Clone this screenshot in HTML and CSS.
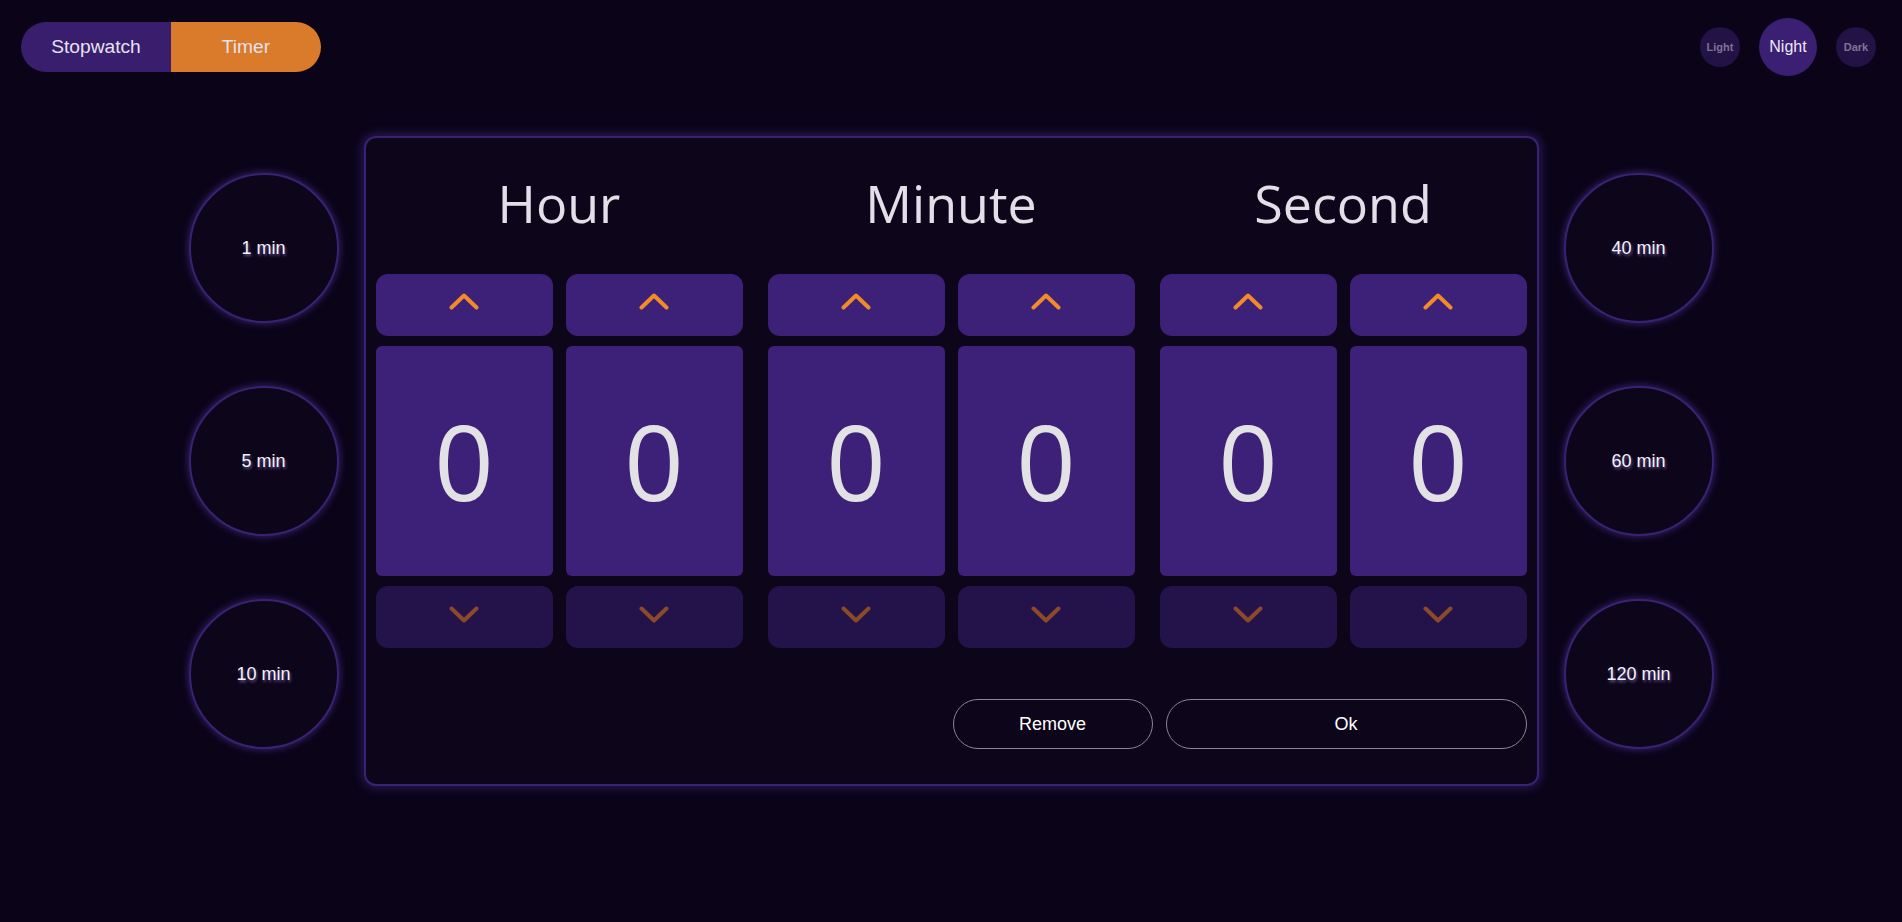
FILE: index.html
```html
<!DOCTYPE html>
<html lang="en">
<head>
<meta charset="utf-8">
<title>Timer</title>
<link rel="stylesheet" href="styles.css">
</head>
<body>
<header class="topbar">
  <div class="mode-toggle">
    <button class="mode mode-stopwatch">Stopwatch</button>
    <button class="mode mode-timer">Timer</button>
  </div>
  <div class="themes">
    <button class="theme">Light</button>
    <button class="theme theme-active">Night</button>
    <button class="theme">Dark</button>
  </div>
</header>

<main class="stage">
  <div class="presets">
    <button class="preset">1 min</button>
    <button class="preset">5 min</button>
    <button class="preset">10 min</button>
  </div>

  <section class="card">
    <div class="groups">
      <div class="group">
        <h2 class="group-label">Hour</h2>
        <div class="digits">
          <div class="digit-col">
            <button class="step step-up"><svg viewBox="0 0 30 17" class="chev"><polyline points="2.5,14.5 15,2.5 27.5,14.5"/></svg></button>
            <div class="digit">0</div>
            <button class="step step-down"><svg viewBox="0 0 30 17" class="chev"><polyline points="2.5,2.5 15,14.5 27.5,2.5"/></svg></button>
          </div>
          <div class="digit-col">
            <button class="step step-up"><svg viewBox="0 0 30 17" class="chev"><polyline points="2.5,14.5 15,2.5 27.5,14.5"/></svg></button>
            <div class="digit">0</div>
            <button class="step step-down"><svg viewBox="0 0 30 17" class="chev"><polyline points="2.5,2.5 15,14.5 27.5,2.5"/></svg></button>
          </div>
        </div>
      </div>
      <div class="group">
        <h2 class="group-label">Minute</h2>
        <div class="digits">
          <div class="digit-col">
            <button class="step step-up"><svg viewBox="0 0 30 17" class="chev"><polyline points="2.5,14.5 15,2.5 27.5,14.5"/></svg></button>
            <div class="digit">0</div>
            <button class="step step-down"><svg viewBox="0 0 30 17" class="chev"><polyline points="2.5,2.5 15,14.5 27.5,2.5"/></svg></button>
          </div>
          <div class="digit-col">
            <button class="step step-up"><svg viewBox="0 0 30 17" class="chev"><polyline points="2.5,14.5 15,2.5 27.5,14.5"/></svg></button>
            <div class="digit">0</div>
            <button class="step step-down"><svg viewBox="0 0 30 17" class="chev"><polyline points="2.5,2.5 15,14.5 27.5,2.5"/></svg></button>
          </div>
        </div>
      </div>
      <div class="group">
        <h2 class="group-label">Second</h2>
        <div class="digits">
          <div class="digit-col">
            <button class="step step-up"><svg viewBox="0 0 30 17" class="chev"><polyline points="2.5,14.5 15,2.5 27.5,14.5"/></svg></button>
            <div class="digit">0</div>
            <button class="step step-down"><svg viewBox="0 0 30 17" class="chev"><polyline points="2.5,2.5 15,14.5 27.5,2.5"/></svg></button>
          </div>
          <div class="digit-col">
            <button class="step step-up"><svg viewBox="0 0 30 17" class="chev"><polyline points="2.5,14.5 15,2.5 27.5,14.5"/></svg></button>
            <div class="digit">0</div>
            <button class="step step-down"><svg viewBox="0 0 30 17" class="chev"><polyline points="2.5,2.5 15,14.5 27.5,2.5"/></svg></button>
          </div>
        </div>
      </div>
    </div>
    <div class="actions">
      <button class="action action-remove">Remove</button>
      <button class="action action-ok">Ok</button>
    </div>
  </section>

  <div class="presets">
    <button class="preset">40 min</button>
    <button class="preset">60 min</button>
    <button class="preset">120 min</button>
  </div>
</main>
</body>
</html>
```

FILE: styles.css
```css
* {
  box-sizing: border-box;
}

html, body {
  margin: 0;
  padding: 0;
}

body {
  background: #0b0419;
  font-family: "Liberation Sans", Arial, sans-serif;
  color: #e6e2ee;
  min-height: 922px;
}

button {
  font-family: inherit;
  border: none;
  padding: 0;
  margin: 0;
  cursor: pointer;
}

/* ---------- top bar ---------- */
.topbar {
  display: flex;
  align-items: center;
  justify-content: space-between;
  padding: 18px 26px 0 21px;
  height: 76px;
}

.mode-toggle {
  display: flex;
  height: 50px;
  border-radius: 25px;
  overflow: hidden;
}

.mode {
  width: 150px;
  height: 50px;
  font-size: 19.2px;
  color: #e6e2ee;
}

.mode-stopwatch {
  background: #3a1e6e;
}

.mode-timer {
  background: #d97b2a;
}

.themes {
  display: flex;
  align-items: center;
  gap: 19px;
}

.theme {
  width: 40px;
  height: 40px;
  border-radius: 50%;
  background: #231245;
  color: #7d7396;
  font-size: 11px;
  font-weight: bold;
}

.theme-active {
  width: 58px;
  height: 58px;
  background: #3b1f72;
  color: #ece8f4;
  font-size: 16px;
  font-weight: normal;
}

/* ---------- stage ---------- */
.stage {
  display: flex;
  justify-content: center;
  align-items: center;
  gap: 25px;
  margin-top: 60px;
}

.presets {
  display: flex;
  flex-direction: column;
  gap: 63px;
}

.preset {
  width: 150px;
  height: 150px;
  border-radius: 50%;
  background: #0d0519;
  border: 2px solid #3a2172;
  box-shadow: 0 0 7px 1px rgba(86, 52, 170, 0.55);
  color: #f4f2f8;
  font-size: 18px;
  text-shadow: 1px 2px 3px rgba(150, 125, 215, 0.7);
}

/* ---------- card ---------- */
.card {
  width: 1175px;
  height: 650px;
  background: #0d0519;
  border: 2px solid #3a2172;
  border-radius: 12px;
  box-shadow: 0 0 10px 2px rgba(70, 40, 140, 0.55);
  padding: 29px 10px 35px;
  display: flex;
  flex-direction: column;
}

.groups {
  display: flex;
  gap: 25px;
}

.group {
  width: 367px;
  display: flex;
  flex-direction: column;
}

.group-label {
  margin: 0;
  height: 71px;
  line-height: 71px;
  text-align: center;
  font-family: "Open Sans", sans-serif;
  font-weight: 400;
  font-size: 52px;
  color: #e2dfe8;
}

.digits {
  display: flex;
  gap: 13px;
  margin-top: 36px;
}

.digit-col {
  width: 177px;
  display: flex;
  flex-direction: column;
  gap: 10px;
}

.step {
  height: 62px;
  border-radius: 12px;
  display: flex;
  align-items: center;
  justify-content: center;
  padding-bottom: 7px;
}

.step-up {
  background: #3d2179;
}

.step-down {
  background: #24134a;
  padding-bottom: 6px;
}

.chev {
  width: 30px;
  height: 17px;
  fill: none;
  stroke-width: 4;
  stroke-linecap: round;
  stroke-linejoin: round;
}

.step-up .chev {
  stroke: #f28b27;
}

.step-down .chev {
  stroke: #8b4b26;
}

.digit {
  height: 230px;
  border-radius: 6px;
  background: #3d2179;
  display: flex;
  align-items: center;
  justify-content: center;
  font-family: "Open Sans", sans-serif;
  font-size: 104px;
  font-weight: 400;
  color: #e2e1e4;
  line-height: 1;
}

/* ---------- actions ---------- */
.actions {
  display: flex;
  justify-content: flex-end;
  gap: 13px;
  margin-top: 51px;
}

.action {
  height: 50px;
  border-radius: 25px;
  background: transparent;
  border: 1px solid #8a8692;
  color: #ffffff;
  font-size: 18px;
}

.action-remove {
  width: 200px;
}

.action-ok {
  width: 361px;
}
```
